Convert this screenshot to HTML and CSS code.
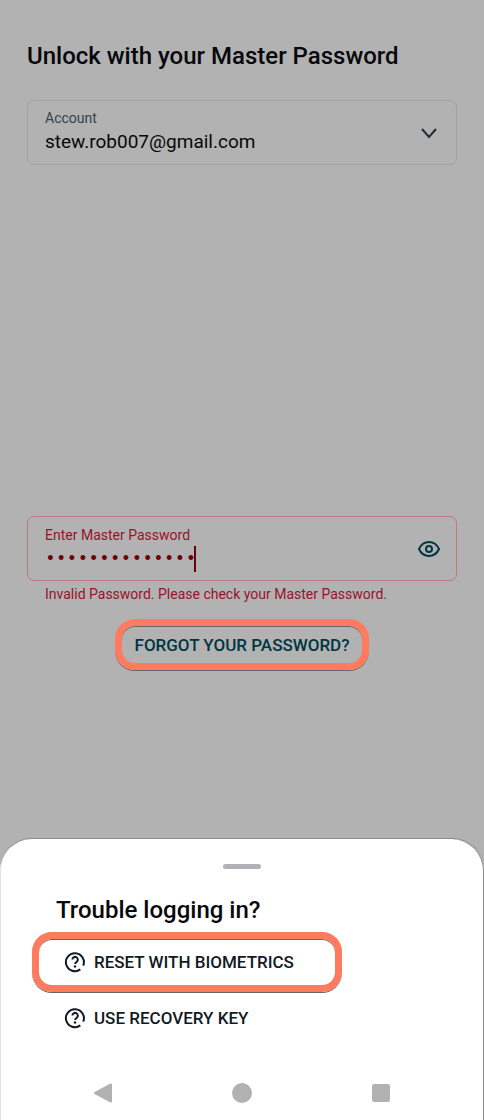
FILE: index.html
```html
<!DOCTYPE html>
<html lang="en">
<head>
    <meta charset="UTF-8">
    <meta name="viewport" content="width=device-width, initial-scale=1.0">
    <title>Unlock</title>
    <link rel="stylesheet" href="styles.css">
</head>
<body>
    <main class="unlock">
        <h1>Unlock with your Master Password</h1>
        <div class="field">
            <div class="field-text">
                <label for="account">Account</label>
                <select id="account">
                    <option>stew.rob007@gmail.com</option>
                </select>
            </div>
            <svg class="chevron" width="24" height="24" viewBox="0 0 24 24" aria-hidden="true">
                <path d="M5 8l7 8 7-8"/>
            </svg>
        </div>
        <form class="password-form">
            <div class="field field-error">
                <div class="field-text">
                    <label for="password">Enter Master Password</label>
                    <div class="password-row">
                        <input type="password" id="password" value="masterpassword">
                        <span class="caret"></span>
                    </div>
                </div>
                <button type="button" class="show-password" aria-label="Show password">
                    <svg width="24" height="24" viewBox="0 0 24 24" aria-hidden="true">
                        <path d="M2 12C4 7.500 8 5 12 5s8 2.500 10 7c-2 4.500-6 7-10 7s-8-2.500-10-7z"/>
                        <circle cx="12" cy="12" r="3"/>
                    </svg>
                </button>
            </div>
            <p class="error">Invalid Password. Please check your Master Password.</p>
            <button type="button" class="forgot highlight">FORGOT YOUR PASSWORD?</button>
        </form>
    </main>
    <section class="sheet">
        <div class="handle"></div>
        <h2>Trouble logging in?</h2>
        <button type="button" class="option highlight">
            <svg width="22" height="22" viewBox="0 0 22 22" aria-hidden="true">
                <path d="M16.300 18.400A9 9 0 1 1 19.200 14.700"/>
                <path d="M8.400 8.600a2.700 2.700 0 1 1 4.400 2.100c-1 .8-1.700 1.200-1.700 2.300"/>
                <circle class="dot" cx="11" cy="15.500" r="1.200"/>
            </svg>
            RESET WITH BIOMETRICS
        </button>
        <button type="button" class="option">
            <svg width="22" height="22" viewBox="0 0 22 22" aria-hidden="true">
                <path d="M16.300 18.400A9 9 0 1 1 19.200 14.700"/>
                <path d="M8.400 8.600a2.700 2.700 0 1 1 4.400 2.100c-1 .8-1.700 1.200-1.700 2.300"/>
                <circle class="dot" cx="11" cy="15.500" r="1.200"/>
            </svg>
            USE RECOVERY KEY
        </button>
        <nav class="system-nav">
            <button type="button" aria-label="Back">
                <svg width="20" height="20" viewBox="0 0 20 20"><path d="M2 10L18 1.500v17z"/></svg>
            </button>
            <button type="button" aria-label="Home">
                <svg width="20" height="20" viewBox="0 0 20 20"><circle cx="10" cy="10" r="9"/></svg>
            </button>
            <button type="button" aria-label="Recent apps">
                <svg width="20" height="20" viewBox="0 0 20 20"><rect x="2" y="2" width="16" height="16" rx="1"/></svg>
            </button>
        </nav>
    </section>
</body>
</html>
```

FILE: styles.css
```css
* { box-sizing: border-box; }
body { margin: 0; min-height: 100vh; display: flex; flex-direction: column; background: #b2b2b2; color: #06080b; font-family: Roboto, sans-serif; }
h1, h2 { margin: 0; font-size: 24px; line-height: 32px; font-weight: 500; }
button { border: 0; padding: 0; background: none; color: inherit; font-family: inherit; cursor: pointer; }
svg { display: block; fill: none; stroke: currentColor; stroke-width: 2; flex: none; }

.unlock { flex: 1; display: flex; flex-direction: column; padding: 40px 27px 169px; }
.field { display: flex; align-items: center; height: 65px; padding: 0 15px 0 17px; border: 1px solid #a0a0a0; border-radius: 7px; }
.unlock > .field { margin-top: 28px; }
.field-text { flex: 1; padding-bottom: 3px; }
.field label { display: block; font-size: 14px; line-height: 20px; color: #33434f; }
.field select { display: block; width: 100%; height: 26px; padding: 0; border: 0; appearance: none; background: none; color: #06080b; font-family: inherit; font-size: 19px; }
.chevron { color: #1e2f3c; }

.password-form { display: flex; flex-direction: column; margin-top: auto; }
.field-error { border-color: #bd7880; }
.field-error .field-text { padding-bottom: 0; }
.field-error .field-text label { color: #98122a; }
.password-row { display: flex; align-items: center; height: 28px; }
.password-row input { width: 149px; padding: 0; border: 0; outline: 0; background: none; color: #6b0009; font-family: "Liberation Mono", monospace; font-size: 18px; }
.caret { width: 2px; height: 26px; background: #6b0009; }
.field .show-password { color: #003542; }
.error { margin: 3px 18px 0; font-size: 14px; line-height: 20px; color: #98122a; }

.highlight { border: 7px solid #ff7b5f; border-radius: 20px; box-shadow: 0 1px 0 #666, inset 0 1px 0 #666; }
.forgot { align-self: center; height: 51px; margin-top: 15px; padding: 0 13px; color: #003542; font-size: 17px; font-weight: 500; }

.sheet { display: flex; flex-direction: column; align-items: flex-start; padding: 25px 32px 17px; border-radius: 32px 32px 0 0; background: #fff; box-shadow: inset 1px 0 0 #e2e2e2, inset -1px 0 0 #8c8c8c, 0 -1px 0 #8c8c8c; }
.handle { align-self: center; width: 38px; height: 5px; border-radius: 3px; background: #b2b1b6; }
.sheet h2 { margin: 25px 24px 6px; }
.option { display: flex; align-items: center; gap: 8px; height: 60px; padding: 0 32px; color: #111a24; font-size: 17px; font-weight: 500; }
.option.highlight { width: 310px; max-width: 100%; padding: 0 25px; }
.option + .option { height: 52px; }
.option .dot { fill: currentColor; stroke: none; }
.system-nav { align-self: stretch; display: flex; justify-content: space-between; margin-top: 39px; padding: 0 61px; color: #b1b1b1; }
.system-nav svg { fill: currentColor; stroke-linejoin: round; }
```
